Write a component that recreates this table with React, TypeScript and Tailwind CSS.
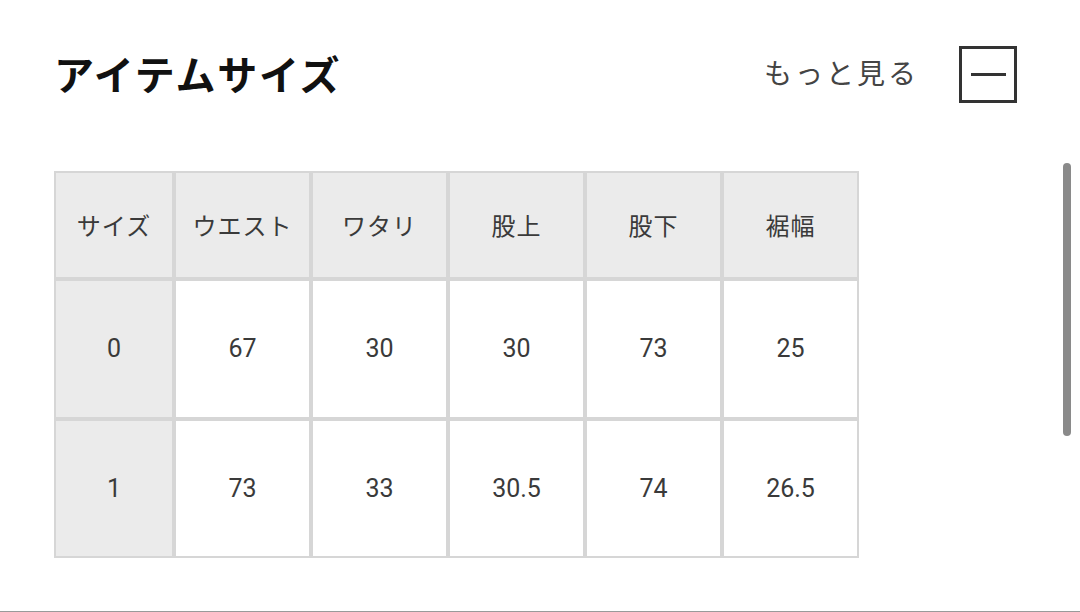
export default function App() {
  const headers = ['サイズ', 'ウエスト', 'ワタリ', '股上', '股下', '裾幅']
  const rows = [
    ['0', '67', '30', '30', '73', '25'],
    ['1', '73', '33', '30.5', '74', '26.5'],
  ]

  return (
    <div className="relative w-[1080px] h-[612px] bg-white border-b border-[#9a9a9a] overflow-hidden font-['Noto_Sans_CJK_JP',sans-serif]">
      {/* header */}
      <div className="flex items-center justify-between pt-[46px] pl-[54px] pr-[63px]">
        <h2 className="text-[40px] font-bold text-[#111] leading-none tracking-[1.8px] mb-[4px]">アイテムサイズ</h2>
        <div className="flex items-center gap-[40px]">
          <span className="text-[28px] tracking-[3px] text-[#444] leading-none mb-[6px]">もっと見る</span>
          <button className="w-[58px] h-[57px] border-[3px] border-[#333] flex items-center justify-center">
            <span className="block w-[35px] h-[3px] bg-[#333]" />
          </button>
        </div>
      </div>

      {/* size table */}
      <div className="mt-[68px] ml-[54px] w-fit grid grid-cols-[116px_repeat(5,133px)] grid-rows-[104px_136px_135px] gap-[4px] p-[2px] bg-[#d6d6d6]">
        {headers.map((h) => (
          <div
            key={h}
            className="bg-[#ebebeb] flex items-center justify-center text-[24px] text-[#3a3a3a] tracking-[1px]"
          >
            {h}
          </div>
        ))}
        {rows.map((r) =>
          r.map((v, i) => (
            <div
              key={r[0] + '-' + i}
              className={
                i === 0
                  ? 'bg-[#ebebeb] flex items-center justify-center text-[25px] text-[#3a3a3a] font-["Roboto",sans-serif]'
                  : 'bg-white flex items-center justify-center text-[25px] text-[#3a3a3a] font-["Roboto",sans-serif]'
              }
            >
              {v}
            </div>
          ))
        )}
      </div>

      {/* scrollbar thumb */}
      <div className="absolute left-[1063px] top-[163px] w-[8px] h-[273px] rounded-full bg-[#8a8a8a]" />
    </div>
  )
}
